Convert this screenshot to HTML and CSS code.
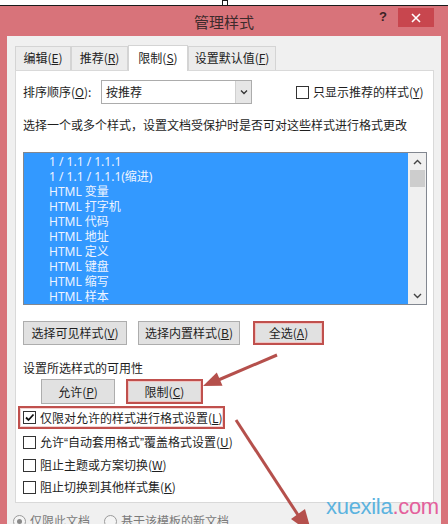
FILE: index.html
```html
<!DOCTYPE html>
<html>
<head>
<meta charset="utf-8">
<title>管理样式</title>
<link rel="stylesheet" href="styles.css">
</head>
<body>
<div class="page">
  <div class="topstrip"></div>
  <div class="titlebar">
    <div></div>
    <div class="title">管理样式</div>
    <div class="controls">
      <span class="help">?</span>
      <span class="close"><svg width="10" height="10" viewBox="0 0 10 10"><path d="M1 1L9 9M9 1L1 9" stroke="#fff" stroke-width="1.6"/></svg></span>
    </div>
  </div>
  <div class="frame">
    <div class="tabs">
      <div class="tab t1">编辑(<u>E</u>)</div>
      <div class="tab t2">推荐(<u>R</u>)</div>
      <div class="tab t3 active">限制(<u>S</u>)</div>
      <div class="tab t4">设置默认值(<u>F</u>)</div>
    </div>
    <div class="panel">
      <div class="sortrow">
        <span class="sortlabel">排序顺序(<u>O</u>):</span>
        <div class="select">
          <span class="sel-text">按推荐</span>
          <span class="sel-btn"><svg width="8" height="6" viewBox="0 0 8 6"><path d="M1 1.5L4 4.5L7 1.5" fill="none" stroke="#333" stroke-width="1.3"/></svg></span>
        </div>
        <div class="chk-inline"><span class="box"></span><span>只显示推荐的样式(<u>Y</u>)</span></div>
      </div>
      <div class="desc">选择一个或多个样式，设置文档受保护时是否可对这些样式进行格式更改</div>
      <div class="list">
        <div class="items">
          <div class="item">1 / 1.1 / 1.1.1</div>
          <div class="item">1 / 1.1 / 1.1.1(缩进)</div>
          <div class="item">HTML 变量</div>
          <div class="item">HTML 打字机</div>
          <div class="item">HTML 代码</div>
          <div class="item">HTML 地址</div>
          <div class="item">HTML 定义</div>
          <div class="item">HTML 键盘</div>
          <div class="item">HTML 缩写</div>
          <div class="item">HTML 样本</div>
        </div>
        <div class="scroll">
          <div class="sarrow"><svg width="9" height="6" viewBox="0 0 9 6"><path d="M1 5L4.5 1.5L8 5" fill="none" stroke="#444" stroke-width="1.4"/></svg></div>
          <div class="thumb"></div>
          <div class="sfill"></div>
          <div class="sarrow"><svg width="9" height="6" viewBox="0 0 9 6"><path d="M1 1L4.5 4.5L8 1" fill="none" stroke="#444" stroke-width="1.4"/></svg></div>
        </div>
      </div>
      <div class="btnrow1">
        <div class="btn b-visible">选择可见样式(<u>V</u>)</div>
        <div class="btn b-builtin">选择内置样式(<u>B</u>)</div>
        <div class="btn b-all marked">全选(<u>A</u>)</div>
      </div>
      <div class="avail">设置所选样式的可用性</div>
      <div class="btnrow2">
        <div class="btn b-allow">允许(<u>P</u>)</div>
        <div class="btn b-limit marked">限制(<u>C</u>)</div>
      </div>
      <div class="chk hl r1">
        <span class="box checked"><svg width="11" height="11" viewBox="0 0 11 11"><path d="M2 5.5L4.5 8L9.5 2.5" fill="none" stroke="#111" stroke-width="1.8"/></svg></span>
        <span>仅限对允许的样式进行格式设置(<u>L</u>)</span>
      </div>
      <div class="chk r2"><span class="box"></span><span>允许<span class="q">“</span>自动套用格式<span class="q">”</span>覆盖格式设置(<u>U</u>)</span></div>
      <div class="chk r3"><span class="box"></span><span>阻止主题或方案切换(<u>W</u>)</span></div>
      <div class="chk r4"><span class="box"></span><span>阻止切换到其他样式集(<u>K</u>)</span></div>
    </div>
    <div class="radios">
      <span class="radio on"><span class="dot"></span></span><span class="rtext rt1">仅限此文档</span>
      <span class="radio"></span><span class="rtext">基于该模板的新文档</span>
    </div>
  </div>
  <div class="grip"></div>
  <svg class="arrows" width="448" height="524" viewBox="0 0 448 524">
    <line x1="277" y1="355" x2="216" y2="381" stroke="#b5504c" stroke-width="3"/>
    <polygon points="203,386 222.5,385.8 216.8,372.4" fill="#b5504c"/>
    <line x1="236" y1="420" x2="298" y2="515" stroke="#b5504c" stroke-width="3"/>
    <polygon points="312,534 305,509 291,519" fill="#b5504c"/>
  </svg>
  <div class="watermark"><span class="wm-blue">xuexila</span><span class="wm-pink">.com</span></div>
</div>
</body>
</html>
```
FILE: styles.css
```css
* { box-sizing: border-box; }
html, body { margin: 0; padding: 0; }
body {
  width: 448px;
  height: 524px;
  overflow: hidden;
  background: #d8737a;
  font-family: "Noto Sans CJK SC", "Noto Sans", sans-serif;
  font-size: 12px;
  color: #1e1e1e;
}
u { text-decoration: underline; text-underline-offset: 1px; }
.page { position: relative; width: 448px; height: 524px; overflow: hidden; }

.topstrip { height: 6px; background: #fff; border-bottom: 1px solid #1a1a1a; }
.grip {
  position: absolute; left: 222px; top: 0; width: 6px; height: 6px;
  background: #fff; border: 1px solid #1a1a1a;
}

.titlebar {
  height: 30px;
  display: grid;
  grid-template-columns: 1fr auto 1fr;
  align-items: start;
}
.title {
  font-size: 15px;
  line-height: 20px;
  margin-top: 6px;
  color: #3d2b2c;
}
.controls {
  justify-self: end;
  display: flex;
  align-items: flex-start;
  padding-right: 14px;
}
.help {
  font-family: "Liberation Sans", sans-serif;
  font-size: 13px;
  font-weight: bold;
  line-height: 14px;
  margin-top: 4px;
  margin-right: 11px;
  color: #3b2224;
}
.close {
  margin-top: 2px;
  width: 36px;
  height: 19px;
  background: #c8464e;
  display: flex;
  align-items: center;
  justify-content: center;
}

.frame {
  margin: 0 7px;
  height: 488px;
  background: #f0f0f0;
  padding: 9px 7px 0 8px;
}
.tabs {
  height: 25px;
  display: flex;
  align-items: flex-end;
}
.tab {
  height: 24px;
  border: 1px solid #d4d4d4;
  border-bottom: none;
  background: #ececec;
  text-align: center;
  line-height: 22px;
  color: #222;
}
.t1 { width: 56px; }
.t2 { width: 57px; }
.t3 { width: 60px; }
.t4 { width: 88px; }
.tab.active {
  height: 26px;
  margin-bottom: -1px;
  background: #fff;
  position: relative;
  z-index: 1;
  line-height: 24px;
}

.panel {
  height: 433px;
  background: #fff;
  border: 1px solid #d9d9d9;
  padding: 0 7px;
}

.sortrow {
  margin-top: 9px;
  height: 24px;
  display: flex;
  align-items: center;
}
.sortlabel { width: 78px; line-height: 16px; }
.select {
  width: 151px;
  height: 24px;
  border: 1px solid #acacac;
  background: #fff;
  display: flex;
  align-items: stretch;
}
.sel-text { flex: 1; padding-left: 4px; line-height: 22px; }
.sel-btn {
  width: 16px;
  background: #e6e6e6;
  border-left: 1px solid #d0d0d0;
  display: flex;
  align-items: center;
  justify-content: center;
}
.chk-inline {
  margin-left: 44px;
  display: flex;
  align-items: center;
  gap: 4px;
  line-height: 16px;
}
.box {
  width: 13px;
  height: 13px;
  border: 1px solid #333;
  background: #fff;
  display: flex;
  align-items: center;
  justify-content: center;
  flex: none;
}

.desc { margin-top: 13px; height: 16px; line-height: 16px; }

.list {
  margin-top: 19px;
  width: 404px;
  height: 153px;
  border: 1px solid #828790;
  display: flex;
}
.items {
  width: 384px;
  background: #3399ff;
  padding-top: 1px;
  padding-left: 25px;
  font-family: "Noto Sans", "Noto Sans CJK SC", sans-serif;
}
.item {
  height: 15px;
  line-height: 15px;
  color: #eef4ff;
  white-space: nowrap;
  overflow: hidden;
}
.scroll {
  width: 18px;
  background: #f0f0f0;
  display: flex;
  flex-direction: column;
  align-items: center;
}
.sarrow {
  height: 17px;
  width: 100%;
  display: flex;
  align-items: center;
  justify-content: center;
}
.thumb { width: 15px; height: 17px; background: #cdcdcd; margin-left: 1px; }
.sfill { flex: 1; }

.btn {
  height: 24px;
  border: 1px solid #adadad;
  background: #e1e1e1;
  text-align: center;
  line-height: 22px;
  color: #1e1e1e;
}
.btnrow1 { margin-top: 16px; display: flex; }
.b-visible { width: 104px; }
.b-builtin { width: 102px; margin-left: 11px; }
.b-all { width: 71px; margin-left: 13px; }
.marked {
  border: 2px solid #c0504d;
  box-shadow: inset 0 0 0 1px #efc4c2;
  line-height: 20px;
}

.avail { margin-top: 15px; height: 16px; line-height: 16px; }

.btnrow2 { margin-top: 3px; display: flex; padding-left: 18px; }
.b-allow { width: 74px; height: 25px; line-height: 23px; }
.b-limit { width: 77px; height: 25px; margin-left: 11px; line-height: 21px; }

.chk {
  height: 22px;
  display: flex;
  align-items: center;
  gap: 4px;
  line-height: 16px;
}
.q { font-family: "Liberation Sans", sans-serif; }
.chk.hl {
  margin-top: 2px;
  margin-left: -5px;
  padding-left: 3px;
  width: 207px;
  height: 23px;
  border: 2px solid #c0504d;
  box-shadow: inset 0 0 0 1px #f3d3d2;
}
.r2 { margin-top: 2px; }
.r3 { margin-top: 1px; }

.radios {
  margin-top: 10px;
  height: 16px;
  display: flex;
  align-items: center;
  margin-left: -2px;
}
.radio {
  width: 13px;
  height: 13px;
  border: 1px solid #9a9a9a;
  border-radius: 50%;
  background: #f4f4f4;
  display: flex;
  align-items: center;
  justify-content: center;
  flex: none;
}
.dot { width: 5px; height: 5px; border-radius: 50%; background: #8a8a8a; }
.rtext { margin-left: 4px; color: #7a7a7a; line-height: 16px; }
.rt1 { width: 74px; }

.arrows { position: absolute; left: 0; top: 0; pointer-events: none; }

.watermark {
  position: absolute;
  left: 326px;
  top: 494px;
  font-family: "Liberation Sans", sans-serif;
  font-size: 22px;
  line-height: 26px;
  letter-spacing: -0.3px;
}
.wm-blue { color: #5bb3df; }
.wm-pink { color: #e4609c; }
```
